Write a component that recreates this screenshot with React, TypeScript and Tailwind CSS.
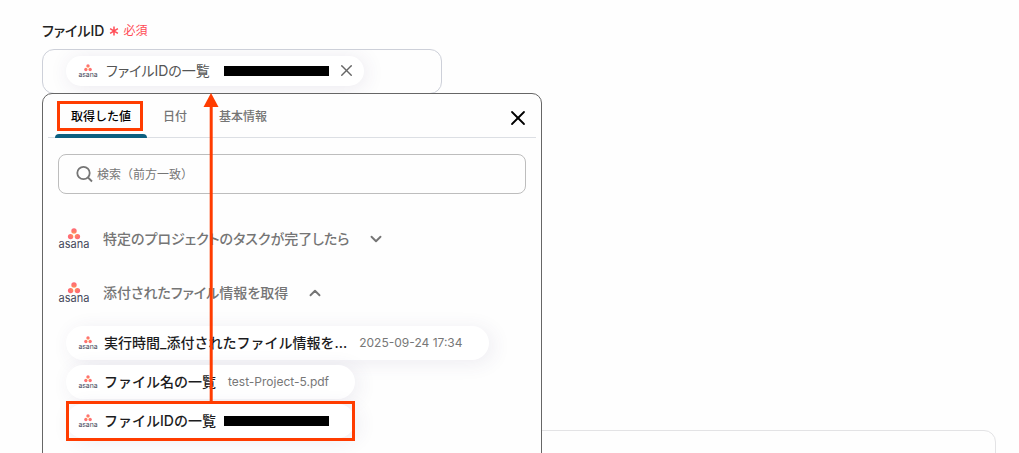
import { useState } from 'react';
import { ChevronDown, ChevronUp, X } from 'lucide-react';

const tabs = ['取得した値', '日付', '基本情報'];

function AsanaLogo(props: { small?: boolean }) {
    return (
        <svg
            viewBox="0 0 32 22"
            role="img"
            aria-label="asana"
            className={props.small ? 'h-[14px] w-5 shrink-0' : 'h-[22px] w-8 shrink-0'}
        >
            <defs>
                <radialGradient id="dots" gradientUnits="userSpaceOnUse" cx="16" cy="6.5" r="6">
                    <stop offset="0" stopColor="#ffb150" />
                    <stop offset="0.5" stopColor="#ff7a66" />
                    <stop offset="1" stopColor="#ff6a78" />
                </radialGradient>
            </defs>
            <g fill="url(#dots)">
                <circle cx="16" cy="3" r="2.7" />
                <circle cx="12.6" cy="8.6" r="2.7" />
                <circle cx="19.4" cy="8.6" r="2.7" />
            </g>
            <text x="16" y="20" textAnchor="middle" fontSize="11" fill="#45475a">asana</text>
        </svg>
    )
}

function Redacted() {
    return <span className="h-[10px] w-[105px] shrink-0 bg-black" />
}

function ValueItem(props: { label: string, value?: string, marked?: boolean }) {
    return (
        <li>
            <button
                type="button"
                className="relative flex h-[34px] items-center rounded-full bg-white pl-3 pr-[26px] shadow-[4px_3px_20px_rgba(70,50,110,0.09)]"
            >
                <AsanaLogo small />
                <span className="ml-1.5 text-sm font-medium text-[#1c1c1e]">{props.label}</span>
                {props.value
                    ? <span className="ml-3 text-xs text-[#777]">{props.value}</span>
                    : <span className="ml-2 flex"><Redacted /></span>}
                {props.marked && <span className="absolute inset-x-0 -inset-y-[3px] border-3 border-[#ff3c00]" />}
            </button>
        </li>
    )
}

function GroupHeader(props: { title: string, open: boolean, onClick: () => void }) {
    const Chevron = props.open ? ChevronUp : ChevronDown
    return (
        <button type="button" aria-expanded={props.open} onClick={props.onClick} className="flex h-[54px] items-center text-[#757575]">
            <AsanaLogo />
            <span className="ml-[13px] text-sm font-medium [font-feature-settings:'palt']">{props.title}</span>
            <Chevron className="ml-[18px] size-[18px]" strokeWidth={2.5} />
        </button>
    )
}

function ValuePicker() {
    const [tab, setTab] = useState(tabs[0])
    const [taskOpen, setTaskOpen] = useState(false)
    const [fileOpen, setFileOpen] = useState(true)

    return (
        <div className="absolute left-0 top-full -mt-px w-[500px] rounded-[10px] border border-[#666] bg-[#fefefe] pb-8">
            <div className="mx-[5px] flex h-11 items-stretch border-b border-[#dcdfe4] pl-[7px]">
                {tabs.map((name) => (
                    <button
                        key={name}
                        type="button"
                        onClick={() => setTab(name)}
                        className={name === tab
                            ? 'relative px-4 pt-[3px] text-xs font-medium text-black'
                            : 'relative px-4 pt-[3px] text-xs font-medium text-[#757575]'}
                    >
                        {name}
                        {name === tab && <span className="absolute inset-x-0 -bottom-px h-1 rounded-t bg-[#0b5f80]" />}
                        {name === tabs[0] && <span className="absolute left-[2px] right-1 top-[7px] h-[30px] border-3 border-[#ff3c00]" />}
                    </button>
                ))}
                <button type="button" aria-label="閉じる" className="ml-auto mr-1.5 mt-1">
                    <X className="size-6 text-black" strokeWidth={1.8} />
                </button>
            </div>
            <div className="px-[15px] pt-4">
                <label className="flex h-10 items-center rounded-lg border border-[#bdbdbd] pl-4">
                    <svg viewBox="0 0 20 20" className="size-5 shrink-0" fill="none" stroke="#757575" strokeWidth="1.8">
                        <circle cx="8.5" cy="9" r="6.2" />
                        <path d="M13 13.5 17 17.5" />
                    </svg>
                    <input
                        type="text"
                        aria-label="検索"
                        placeholder="検索（前方一致）"
                        className="ml-0.5 w-full bg-transparent pt-0.5 text-xs outline-none placeholder:text-[#757575]"
                    />
                </label>
                <div className="mt-[18px]">
                    <GroupHeader title="特定のプロジェクトのタスクが完了したら" open={taskOpen} onClick={() => setTaskOpen(!taskOpen)} />
                    <GroupHeader title="添付されたファイル情報を取得" open={fileOpen} onClick={() => setFileOpen(!fileOpen)} />
                </div>
                {fileOpen && (
                    <ul className="mt-1.5 flex flex-col items-start gap-[5px] pl-2">
                        <ValueItem label="実行時間_添付されたファイル情報を…" value="2025-09-24 17:34" />
                        <ValueItem label="ファイル名の一覧" value="test-Project-5.pdf" />
                        <ValueItem label="ファイルIDの一覧" marked />
                    </ul>
                )}
            </div>
        </div>
    )
}

// points from the picked value up to the field it fills
function Arrow() {
    return (
        <svg viewBox="0 0 16 308" className="pointer-events-none absolute left-[161px] top-full -mt-px h-[308px] w-4" fill="#ff3c00">
            <path d="M8 0 15.5 14H0.5z" />
            <path d="M6.7 13h3v295h-3z" />
        </svg>
    )
}

function App() {
    return (
        <div className="h-screen overflow-hidden bg-[#fefefe] pl-[42px] pr-[23px] pt-5 font-['Inter','Noto_Sans_CJK_JP',sans-serif]">
            <div className="flex h-[22px] items-center gap-[5px]">
                <span className="text-sm font-medium text-[#222] [font-feature-settings:'palt']">ファイルID</span>
                <span className="flex items-center gap-1 text-xs text-[#ff4b55]">
                    <svg viewBox="0 0 10 10" className="size-[10px]" stroke="currentColor" strokeWidth="1.5">
                        <path d="M5 0.5v9M1.1 2.7l7.8 4.6M8.9 2.7 1.1 7.3" />
                    </svg>
                    必須
                </span>
            </div>
            <div className="relative mt-[7px] w-[500px]">
                <div className="flex h-[45px] w-[400px] items-center overflow-hidden rounded-xl border border-[#cdd0d9] pb-0.5 pl-[23px]">
                    <div className="flex h-[30px] items-center rounded-full bg-white pl-3 pr-2 shadow-[2px_2px_20px_rgba(70,50,110,0.10)]">
                        <AsanaLogo small />
                        <span className="ml-2 text-sm text-[#555] [font-feature-settings:'palt']">ファイルIDの一覧</span>
                        <span className="ml-[14px] flex"><Redacted /></span>
                        <button type="button" aria-label="削除" className="ml-2">
                            <X className="size-[19px] text-[#666]" strokeWidth={1.8} />
                        </button>
                    </div>
                </div>
                <ValuePicker />
                <Arrow />
            </div>
            <div className="mt-[336px] h-40 rounded-xl border border-[#e3e3e5]" />
        </div>
    );
}

export default App
